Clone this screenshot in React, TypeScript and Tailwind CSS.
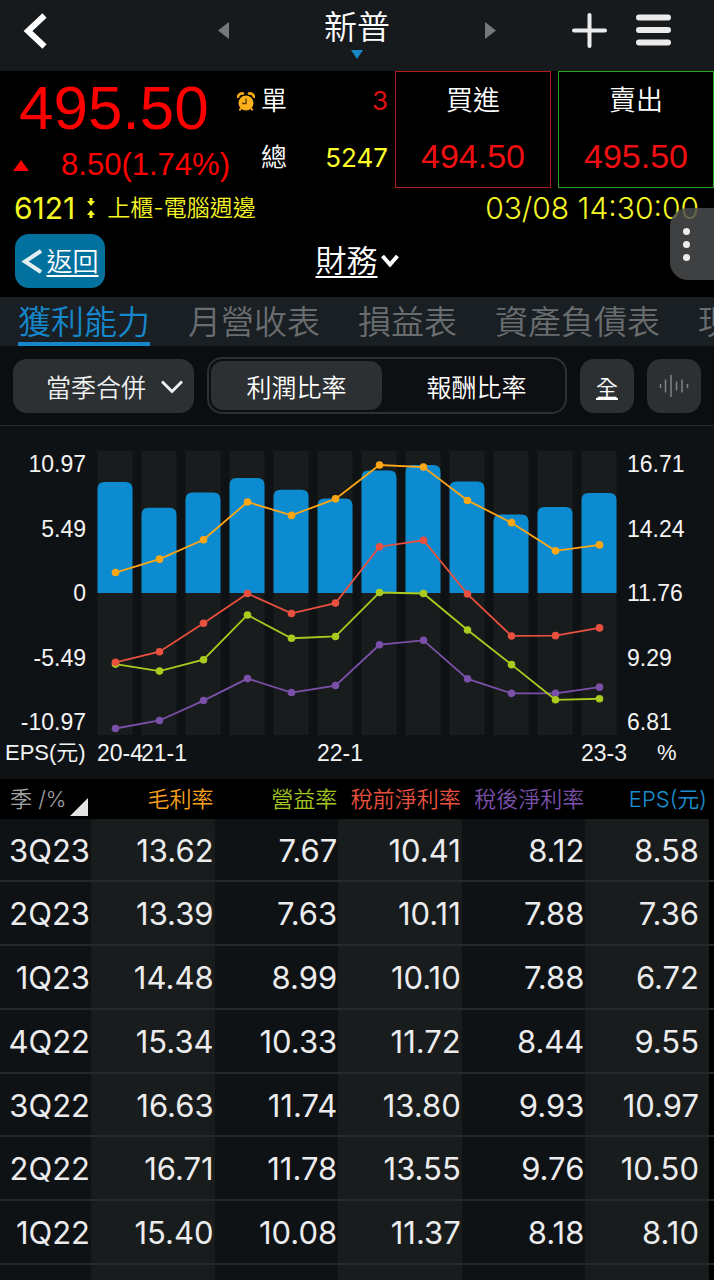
import { useState } from "react";

const tabs = ["獲利能力", "月營收表", "損益表", "資產負債表", "現金流量表"];

// oldest quarter first
const quarters = [
  { label: "20-4", eps: 9.52, gross: 12.55, operating: 9.01, pretax: 9.08, net: 6.52 },
  { label: "21-1", eps: 7.3, gross: 13.07, operating: 8.74, pretax: 9.49, net: 6.83 },
  { label: "", eps: 8.62, gross: 13.82, operating: 9.18, pretax: 10.59, net: 7.6 },
  { label: "", eps: 9.86, gross: 15.28, operating: 10.91, pretax: 11.74, net: 8.45 },
  { label: "", eps: 8.84, gross: 14.76, operating: 10.01, pretax: 10.97, net: 7.91 },
  { label: "22-1", eps: 8.1, gross: 15.4, operating: 10.08, pretax: 11.37, net: 8.18 },
  { label: "", eps: 10.5, gross: 16.71, operating: 11.78, pretax: 13.55, net: 9.76 },
  { label: "", eps: 10.97, gross: 16.63, operating: 11.74, pretax: 13.8, net: 9.93 },
  { label: "", eps: 9.55, gross: 15.34, operating: 10.33, pretax: 11.72, net: 8.44 },
  { label: "", eps: 6.72, gross: 14.48, operating: 8.99, pretax: 10.1, net: 7.88 },
  { label: "", eps: 7.36, gross: 13.39, operating: 7.63, pretax: 10.11, net: 7.88 },
  { label: "23-3", eps: 8.58, gross: 13.62, operating: 7.67, pretax: 10.41, net: 8.12 },
];

const lines = [
  { key: "net", color: "#7a50a8" },
  { key: "operating", color: "#a9cb1f" },
  { key: "pretax", color: "#e9503f" },
  { key: "gross", color: "#ffa614" },
] as const;

const rows = [
  ["3Q23", "13.62", "7.67", "10.41", "8.12", "8.58"],
  ["2Q23", "13.39", "7.63", "10.11", "7.88", "7.36"],
  ["1Q23", "14.48", "8.99", "10.10", "7.88", "6.72"],
  ["4Q22", "15.34", "10.33", "11.72", "8.44", "9.55"],
  ["3Q22", "16.63", "11.74", "13.80", "9.93", "10.97"],
  ["2Q22", "16.71", "11.78", "13.55", "9.76", "10.50"],
  ["1Q22", "15.40", "10.08", "11.37", "8.18", "8.10"],
];

const columns = [
  { name: "毛利率", color: "text-[#f9a11b]" },
  { name: "營益率", color: "text-[#a3c520]" },
  { name: "稅前淨利率", color: "text-[#e8503f]" },
  { name: "稅後淨利率", color: "text-[#7a50a8]" },
  { name: "EPS(元)", color: "text-[#1c8fd0]" },
];

const ZERO = 142;
const barHeight = (eps: number) => (eps / 10.97) * 128;
const lineY = (v: number) => ZERO - ((v - 11.76) / 4.95) * 128;

const Header = () => (
  <header className="grid h-[71px] shrink-0 grid-cols-[1fr_278px_1fr] items-center bg-[#171a1d]">
    <button aria-label="上一頁" className="mb-[9px] ml-[23px] h-9 w-6">
      <svg viewBox="0 0 24 36" className="h-9 w-6" fill="none" stroke="#fff" strokeWidth="6">
        <path d="M21.500 2.500L5 18l16.500 15.500" />
      </svg>
    </button>
    <div className="flex items-center justify-between pb-[10px]">
      <button aria-label="前一檔">
        <svg viewBox="0 0 11 17" className="h-[17px] w-[11px]"><path d="M11 0v17L0 8.500z" fill="#74787b" /></svg>
      </button>
      <button className="flex flex-col items-center pt-1">
        <span className="text-[33px] leading-[42px]">新普</span>
        <svg viewBox="0 0 12 9" className="mt-0.5 h-[9px] w-3"><path d="M0 0h12L6 9z" fill="#1787c6" /></svg>
      </button>
      <button aria-label="後一檔">
        <svg viewBox="0 0 11 17" className="h-[17px] w-[11px]"><path d="M0 0v17l11-8.500z" fill="#74787b" /></svg>
      </button>
    </div>
    <div className="flex items-center justify-end gap-[29px] pb-[10px] pr-[43px]">
      <button aria-label="加入自選">
        <svg viewBox="0 0 35 35" className="size-[35px]" stroke="#ebebec" strokeWidth="4" strokeLinecap="round"><path d="M2 17.500h31M17.500 2v31" /></svg>
      </button>
      <button aria-label="選單">
        <svg viewBox="0 0 35 35" className="size-[35px]" stroke="#ebebec" strokeWidth="6" strokeLinecap="round"><path d="M3 4.500h29M3 17h29M3 29.500h29" /></svg>
      </button>
    </div>
  </header>
);

const AlarmIcon = () => (
  <svg viewBox="0 0 18 20" className="mt-1 h-5 w-[18px]">
    <path d="M1 6a4 4 0 0 1 6-4M17 6a4 4 0 0 0-6-4" fill="none" stroke="#f6a516" strokeWidth="2.500" />
    <circle cx="9" cy="11" r="7.500" fill="#fdb21c" />
    <path d="M4 16l-1.500 2.500M14 16l1.500 2.500" stroke="#f6a516" strokeWidth="2" />
    <path d="M9 6.500V11.500H5" fill="none" stroke="#5a3a00" strokeWidth="1.400" />
  </svg>
);

const Quote = () => (
  <section className="shrink-0 bg-black font-normal">
    <div className="grid h-[114px] grid-cols-[1fr_156px_156px] gap-[7px]">
      <div className="flex justify-between">
        <div className="flex w-[230px] flex-col font-['Liberation_Sans'] text-[#ff0000]">
          <span className="pl-[19px] pt-[3px] text-[62px] leading-[68px]">495.50</span>
          <span className="flex items-center justify-between pl-[13px] text-[31px] leading-[46px]">
            <svg viewBox="0 0 16 11" className="h-[11px] w-4"><path d="M8 0l8 11H0z" fill="#ff0000" /></svg>
            8.50(1.74%)
          </span>
        </div>
        <div className="flex w-[151px] flex-col">
          <div className="flex h-[58px] items-center">
            <AlarmIcon />
            <span className="pl-1.5 text-[26px] font-[350]">單</span>
            <span className="ml-auto text-[26px] text-[#e01010]">3</span>
          </div>
          <div className="flex h-[56px] items-center pl-6">
            <span className="text-[26px] font-[350]">總</span>
            <span className="ml-auto text-[26px] text-[#ffff28]">5247</span>
          </div>
        </div>
      </div>
      <button className="flex flex-col items-center border border-[#b01c1c]">
        <span className="text-[27px] font-[350] leading-[58px]">買進</span>
        <span className="font-['Liberation_Sans'] text-[34px] leading-[52px] text-[#ef0f12]">494.50</span>
      </button>
      <button className="flex flex-col items-center border border-[#2aa52a]">
        <span className="text-[27px] font-[350] leading-[58px]">賣出</span>
        <span className="font-['Liberation_Sans'] text-[34px] leading-[52px] text-[#ef0f12]">495.50</span>
      </button>
    </div>
    <div className="flex h-[46px] items-center pl-[14px] pr-[15px] text-[#f6f625]">
      <span className="text-[30px]">6121</span>
      <svg viewBox="0 0 8 20" className="mx-[12px] h-5 w-2" fill="#f6f625">
        <path d="M2.500 0h3v3H8L4 8 0 3h2.500zM2.500 20h3v-3H8l-4-5-4 5h2.500z" />
      </svg>
      <span className="text-[23px] font-[350]">上櫃-電腦週邊</span>
      <span className="ml-auto text-[30px] font-[350]">03/08 14:30:00</span>
    </div>
  </section>
);

const SubNav = () => (
  <nav className="relative grid h-[66px] shrink-0 grid-cols-[1fr_auto_1fr] items-center bg-black px-[15px] pb-[6px]">
    <a href="#back" className="flex h-[54px] w-[90px] items-center justify-center gap-1 rounded-[14px] bg-[#03719e] text-[26px]">
      <svg viewBox="0 0 21 25" className="h-[25px] w-[21px]" fill="none" stroke="#e3eef3" strokeWidth="4"><path d="M20 2L4 12.500 20 23" /></svg>
      <span className="underline decoration-2 underline-offset-4">返回</span>
    </a>
    <button className="flex items-center gap-[3px] text-[31px]">
      <span className="underline decoration-2 underline-offset-4">財務</span>
      <svg viewBox="0 0 18 14" className="h-[14px] w-[18px]" fill="none" stroke="#fff" strokeWidth="4"><path d="M1.500 2L9 10.500 16.500 2" /></svg>
    </button>
    <button aria-label="更多" className="absolute -top-[23px] right-0 flex h-[72px] w-11 flex-col items-center justify-center gap-[6px] rounded-l-[18px] bg-[#4a4b4e]/85 pr-[11px]">
      <span className="size-[7px] rounded-full bg-[#ececec]" />
      <span className="size-[7px] rounded-full bg-[#ececec]" />
      <span className="size-[7px] rounded-full bg-[#ececec]" />
    </button>
  </nav>
);

const Filters = () => {
  const [ratio, setRatio] = useState("利潤比率");

  return (
    <div className="flex h-20 shrink-0 items-center gap-[13px] border-b border-[#25292c] bg-[#0b0e11] px-[13px] text-[25px]">
      <label className="relative block h-[54px] w-[181px]">
        <select aria-label="期間" className="h-full w-full appearance-none rounded-[14px] bg-[#2c3033] pl-[33px] pt-1.5 text-[#f0f0f0]">
          <option>當季合併</option>
        </select>
        <svg viewBox="0 0 22 14" className="pointer-events-none absolute right-[11px] top-[21px] h-[14px] w-[22px]" fill="none" stroke="#f0f0f0" strokeWidth="3"><path d="M1 1.500l10 10 10-10" /></svg>
      </label>
      <div className="flex h-[57px] flex-1 rounded-[15px] border-2 border-[#2c3033] bg-[#0e0f12] p-0.5">
        {["利潤比率", "報酬比率"].map((name) => (
          <button
            key={name}
            onClick={() => setRatio(name)}
            className={
              ratio === name
                ? "w-[171px] rounded-[12px] bg-[#2c3033] pt-1.5"
                : "flex-1 pl-2 pt-1.5"
            }
          >
            {name}
          </button>
        ))}
      </div>
      <button className="size-[54px] rounded-[14px] bg-[#2c3033] pt-1.5 text-[22px] underline decoration-2 underline-offset-2">全</button>
      <button aria-label="波動" className="flex size-[54px] items-center justify-center rounded-[14px] bg-[#2c3033]">
        <svg viewBox="0 0 30 22" className="h-[22px] w-[30px]" stroke="#7f8386" strokeWidth="1.500">
          <path d="M1.500 9v4M6.500 4.500v13M12 0v22M17.500 6.500v9M23 4.500v13M28.500 9v4" />
        </svg>
      </button>
    </div>
  );
};

const Chart = () => (
  <section className="h-[353px] shrink-0 bg-[#0f1215] pt-[25px] font-['Liberation_Sans','Noto_Sans_CJK_TC',sans-serif] text-[23px] leading-[26px] text-[#f4f4f4]">
    <div className="flex">
      <div className="flex h-[284px] w-[97px] flex-col justify-between pr-[11px] text-right">
        {["10.97", "5.49", "0", "-5.49", "-10.97"].map((t) => <span key={t}>{t}</span>)}
      </div>
      <svg viewBox="0 0 528 284" preserveAspectRatio="none" className="h-[284px] min-w-0 flex-1">
        {quarters.map((q, i) => {
          const x = i * 44 + 0.5;
          const top = ZERO - barHeight(q.eps);
          return (
            <g key={i}>
              <rect x={x} y="0" width="35" height="284" fill="#191c1d" />
              <path d={`M${x} ${ZERO}V${top + 7}q0-7 7-7h21q7 0 7 7V${ZERO}z`} fill="#0c8bd0" />
            </g>
          );
        })}
        {lines.map((l) => (
          <g key={l.key} fill={l.color}>
            <polyline
              points={quarters.map((q, i) => `${i * 44 + 18.5},${lineY(q[l.key])}`).join(" ")}
              fill="none"
              stroke={l.color}
              strokeWidth="1.8"
            />
            {quarters.map((q, i) => <circle key={i} cx={i * 44 + 18.5} cy={lineY(q[l.key])} r="3.8" />)}
          </g>
        ))}
      </svg>
      <div className="flex h-[284px] w-[89px] flex-col justify-between pl-[2px]">
        {["16.71", "14.24", "11.76", "9.29", "6.81"].map((t) => <span key={t}>{t}</span>)}
      </div>
    </div>
    <div className="flex pt-[5px]">
      <span className="w-[97px] whitespace-nowrap pl-[5px] text-[22px]">EPS(元)</span>
      <div className="grid min-w-0 flex-1 grid-cols-12">
        {quarters.map((q, i) => <span key={i} className="w-0 whitespace-nowrap">{q.label}</span>)}
      </div>
      <span className="w-[89px] pl-8 text-[22px]">%</span>
    </div>
  </section>
);

const RatioTable = () => (
  <div className="flex min-h-0 flex-1 flex-col overflow-hidden bg-black">
    <table className="h-[486px] w-full shrink-0 table-fixed border-collapse text-right">
      <colgroup>
        <col className="w-[91px]" />
        {columns.map((c) => <col key={c.name} />)}
        <col className="w-[5px]" />
      </colgroup>
      <thead>
        <tr className="h-10 bg-black text-[22px]">
          <th className="p-0 pl-2.5 text-left font-[350] text-[#a0a2a4]">
            <span className="flex items-end gap-1 whitespace-nowrap">
              季 /%
              <svg viewBox="0 0 18 18" className="size-[18px]"><path d="M18 0v18H0z" fill="#e4e4e4" /></svg>
            </span>
          </th>
          {columns.map((c, i) => (
            <th
              key={c.name}
              className={`${c.color} ${i === 4 ? "pr-0.5" : "pr-px"} whitespace-nowrap p-0 font-[350]`}
            >
              {c.name}
            </th>
          ))}
          <th className="p-0" />
        </tr>
      </thead>
      <tbody className="text-[31px] font-normal leading-10 text-[#ececee]">
        {rows.map((row) => (
          <tr key={row[0]} className="border-b-2 border-[#25292b]">
            {row.map((cell, i) => (
              <td
                key={i}
                className={`p-0 pt-0.5 ${i % 2 ? "bg-[#191c1d]" : "bg-[#0f1215]"} ${i === 5 ? "pr-2.5" : "pr-px"}`}
              >
                {cell}
              </td>
            ))}
            <td className="p-0" />
          </tr>
        ))}
      </tbody>
    </table>
    {/* keep the column stripes running below the last row */}
    <div className="grid flex-1 grid-cols-[91px_repeat(5,1fr)_5px] bg-[#0f1215]">
      <span />
      <span className="bg-[#191c1d]" />
      <span />
      <span className="bg-[#191c1d]" />
      <span />
      <span className="bg-[#191c1d]" />
      <span className="bg-black" />
    </div>
  </div>
);

export default function App() {
  const [active, setActive] = useState(tabs[0]);

  return (
    <main className="flex h-screen flex-col overflow-hidden bg-black font-['Inter','Noto_Sans_CJK_TC',sans-serif] font-[350] text-white">
      <Header />
      <Quote />
      <SubNav />
      <div className="flex h-[49px] shrink-0 gap-[38px] overflow-hidden bg-[#191f22] pl-[18px] text-[33px] leading-[38px]">
        {tabs.map((tab) => (
          <button
            key={tab}
            onClick={() => setActive(tab)}
            className={
              tab === active
                ? "shrink-0 border-b-4 border-[#1787cb] pt-[5px] text-[#1787cb]"
                : "shrink-0 border-b-4 border-transparent pt-[5px] text-[#696d70]"
            }
          >
            {tab}
          </button>
        ))}
      </div>
      <Filters />
      <Chart />
      <RatioTable />
    </main>
  );
}
